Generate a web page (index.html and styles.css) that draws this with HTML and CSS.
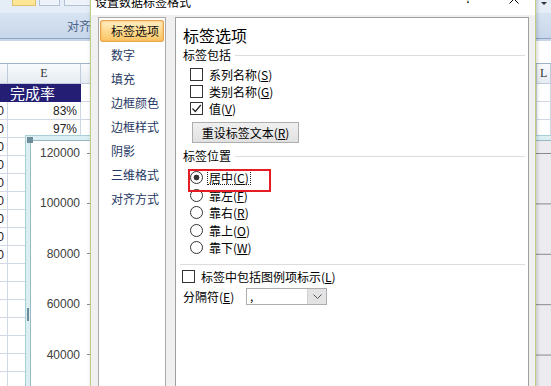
FILE: index.html
```html
<!DOCTYPE html>
<html lang="zh-CN">
<head>
<meta charset="utf-8">
<title>设置数据标签格式</title>
<link rel="stylesheet" href="styles.css">
</head>
<body>

<div class="excel">
  <div class="ribbon">
    <div class="rb-tools">
      <span class="rb-btn on"></span><span class="rb-btn"></span><span class="rb-btn wide"></span>
      <span class="rb-drop"></span>
    </div>
    <div class="rb-group">对齐方式</div>
  </div>
  <div class="fbar"></div>
  <div class="sheet">
    <div class="c hd"></div><div class="c hd">E</div><div class="c hd"></div><div class="c hd hl">L</div>
    <div class="c navy"></div><div class="c navy">完成率</div><div class="c"></div><div class="c"></div>
    <div class="c num">82000</div><div class="c num">83%</div><div class="c"></div><div class="c"></div>
    <div class="c num">96000</div><div class="c num">97%</div><div class="c"></div><div class="c"></div>
    <div class="c num">75000</div><div class="c"></div><div class="c"></div><div class="c"></div>
    <div class="c num">88000</div><div class="c"></div><div class="c"></div><div class="c"></div>
    <div class="c num">91000</div><div class="c"></div><div class="c"></div><div class="c"></div>
    <div class="c num">67000</div><div class="c"></div><div class="c"></div><div class="c"></div>
    <div class="c num">79000</div><div class="c"></div><div class="c"></div><div class="c"></div>
    <div class="c num">84000</div><div class="c"></div><div class="c"></div><div class="c"></div>
    <div class="c num">93000</div><div class="c"></div><div class="c"></div><div class="c"></div>
    <div class="c"></div><div class="c"></div><div class="c"></div><div class="c"></div>
    <div class="c"></div><div class="c"></div><div class="c"></div><div class="c"></div>
    <div class="c"></div><div class="c"></div><div class="c"></div><div class="c"></div>
    <div class="c"></div><div class="c"></div><div class="c"></div><div class="c"></div>
    <div class="c"></div><div class="c"></div><div class="c"></div><div class="c"></div>
    <div class="c"></div><div class="c"></div><div class="c"></div><div class="c"></div>
    <div class="c"></div><div class="c"></div><div class="c"></div><div class="c"></div>
  </div>
</div>

<div class="chart">
  <span class="grip corner"></span><span class="grip side"></span>
  <div class="chart-in">
    <div class="axis">
      <span>120000</span><span>100000</span><span>80000</span><span>60000</span><span>40000</span><span>20000</span>
    </div>
    <div class="plot"></div>
  </div>
</div>

<div class="dialog">
  <div class="titlebar">
    <span class="title">设置数据标签格式</span>
    <span class="help">?</span>
    <svg class="close" width="10" height="10" viewBox="0 0 10 10"><path d="M0.5 0.5L9.5 9.5M9.5 0.5L0.5 9.5" stroke="#000" stroke-width="1" fill="none"/></svg>
  </div>
  <div class="dlg-body">
    <ul class="nav">
      <li class="sel">标签选项</li>
      <li>数字</li>
      <li>填充</li>
      <li>边框颜色</li>
      <li>边框样式</li>
      <li>阴影</li>
      <li>三维格式</li>
      <li>对齐方式</li>
    </ul>
    <div class="panel">
      <h1>标签选项</h1>
      <div class="group">标签包括</div>
      <div class="opts">
        <label class="opt"><span class="cb"></span><span>系列名称(<u>S</u>)</span></label>
        <label class="opt"><span class="cb"></span><span>类别名称(<u>G</u>)</span></label>
        <label class="opt"><span class="cb"><svg width="11" height="11" viewBox="0 0 11 11"><path d="M1.5 5.5L4.3 8.5L9.8 2" stroke="#222" stroke-width="1.2" fill="none"/></svg></span><span>值(<u>V</u>)</span></label>
      </div>
      <button class="btn">重设标签文本(<u>R</u>)</button>
      <div class="group">标签位置</div>
      <div class="opts radios">
        <label class="opt mark"><span class="rd on"></span><span class="focus">居中(<u>C</u>)</span></label>
        <label class="opt"><span class="rd"></span><span>靠左(<u>F</u>)</span></label>
        <label class="opt"><span class="rd"></span><span>靠右(<u>R</u>)</span></label>
        <label class="opt"><span class="rd"></span><span>靠上(<u>O</u>)</span></label>
        <label class="opt"><span class="rd"></span><span>靠下(<u>W</u>)</span></label>
      </div>
      <hr class="sep">
      <label class="opt flush"><span class="cb"></span><span>标签中包括图例项标示(<u>L</u>)</span></label>
      <div class="field">
        <span class="field-label">分隔符(<u>E</u>)</span>
        <span class="combo">
          <span class="val">,</span>
          <span class="arrow"><svg width="9" height="5" viewBox="0 0 9 5"><path d="M0.5 0.5L4.5 4.5L8.5 0.5" stroke="#555" fill="none"/></svg></span>
        </span>
      </div>
    </div>
  </div>
</div>

</body>
</html>
```

FILE: styles.css
```css
* { box-sizing: border-box; }

html, body { margin: 0; height: 100%; }

body {
  position: relative; overflow: hidden;
  width: 551px; height: 386px;
  font: 12px "Noto Sans CJK SC", sans-serif; color: #000;
  background: #fff;
}

/* ---- excel behind ---- */

.excel { display: flex; flex-direction: column; height: 100%; }

.ribbon {
  height: 41px; flex: none;
  background: linear-gradient(#e5edf7 0, #e5edf7 13px, #d7e3f2 13px, #c8d7eb 38px,
    #8ea5c3 38px, #8ea5c3 39px, #c9d6e8 39px);
}

.rb-tools { display: flex; height: 13px; padding-left: 12px; }

.rb-btn {
  width: 24px; height: 6px; margin-right: 3px;
  border: 1px solid #b3c3d7; border-top: none; background: #eef3fa;
}
.rb-btn.on { background: #fce594; border-color: #e0c26a; }
.rb-btn + .rb-btn { width: 21px; }
.rb-btn.wide { width: 29px; margin-left: 1px; }

.rb-drop {
  margin: 2px 4px 0 auto; width: 0; height: 0;
  border-left: 3px solid transparent; border-right: 3px solid transparent;
  border-top: 3px solid #333;
}

.rb-group { height: 25px; line-height: 25px; padding-left: 67px; color: #4c6488; }

.fbar { height: 23px; flex: none; border-bottom: 1px solid #9fb3cb; background: #fff; }

.sheet {
  display: grid;
  grid-template-columns: 8px 73px 1fr 14px;
  grid-template-rows: 20px;
  grid-auto-rows: 18px;
}

.c {
  display: flex; align-items: center; overflow: hidden; white-space: nowrap;
  border-right: 1px solid #d0d7e5; border-bottom: 1px solid #d0d7e5;
}

.hd {
  justify-content: center;
  font: 12px "Liberation Serif", serif; color: #333;
  background: linear-gradient(#f8fafc, #e6ecf3);
  border-color: #c0ccdb;
}
.hd.hl { justify-content: flex-start; padding-left: 3px; }

.navy {
  background: #241f74; color: #fff; font-size: 15px; padding-left: 2px;
  border-color: #241f74;
}

.num {
  justify-content: flex-end; padding-right: 3px;
  font: 12px "Liberation Sans", sans-serif; color: #222;
}

/* ---- chart object ---- */

.chart {
  position: absolute; left: 25px; top: 135px; width: 560px; height: 300px;
  background: #dbeff3; border: 1px solid #a7cfd8; padding: 4px;
}

.grip {
  position: absolute;
  background-image: radial-gradient(circle, #6d8e98 0.8px, transparent 1px);
  background-size: 2px 2px;
}
.grip.corner { left: 1px; top: 1px; width: 6px; height: 6px; }
.grip.side { left: 1px; top: 172px; width: 2px; height: 13px; }

.chart-in { display: flex; height: 100%; background: #fff; border: 1px solid #9bb9c4; }

.axis {
  width: 59px; flex: none; padding-top: 4px;
  display: flex; flex-direction: column; gap: 34.4px;
  font: 12px "Liberation Sans", sans-serif; color: #404040;
}

.axis span { display: flex; justify-content: flex-end; align-items: center; line-height: 16px; }
.axis span::after { content: ""; width: 3px; height: 1px; margin-left: 7px; background: #8a8a8a; }

.plot {
  flex: 1;
  background-color: #ebebf0;
  background-image: linear-gradient(#8a8a8a 0, #8a8a8a 1px, transparent 1px);
  background-size: 100% 50.4px;
  background-position: 0 12px;
}

/* ---- dialog window ---- */

.dialog {
  position: absolute; left: 90px; top: -16px; width: 446px; height: 440px;
  display: flex; flex-direction: column;
  border: 1px solid #bccf82; background: #f0f0f0;
  box-shadow: 1px 0 4px rgba(0, 0, 0, .2);
}

.titlebar {
  height: 30px; flex: none; display: flex; align-items: flex-start;
  padding: 10px 16px 0 4px; background: #fff;
}
.title { line-height: 14px; }
.help { margin: -4px 38px 0 auto; line-height: 14px; }
.close { margin-top: -1px; }

.dlg-body { flex: 1; display: flex; gap: 9px; padding: 2px 6px 0 7px; }

.nav {
  width: 68px; flex: none; margin: 0; padding: 1px; list-style: none;
  background: #fff; border: 1px solid #a9a9a9;
}

.nav li { height: 24px; line-height: 24px; padding-left: 11px; color: #1f3864; }

.nav li.sel {
  height: 22px; line-height: 20px; margin: 1px 0; padding-left: 10px; color: #111;
  border: 1px solid #e3a74e; border-radius: 2px;
  background: linear-gradient(#fff1c9, #fdd98f 50%, #fcc766);
  box-shadow: inset 0 0 3px #f6ad4a;
}

.panel { flex: 1; background: #fff; border: 1px solid #a0a0a0; padding: 0 3px 0 7px; }

.panel h1 { margin: 7px 0 0; font-size: 16px; font-weight: normal; line-height: 20px; }

.group { display: flex; align-items: center; line-height: 16px; margin-top: 2px; }
.group::after { content: ""; flex: 1; height: 1px; margin-left: 4px; background: #dcdcdc; }

.opts { margin-top: 3px; padding-left: 7px; }

.opt { display: flex; align-items: center; gap: 6px; height: 17px; }

.cb {
  width: 13px; height: 13px; flex: none;
  border: 1px solid #333; background: #fff;
  display: flex; align-items: center; justify-content: center;
}

.btn {
  display: block; width: 107px; height: 21px; margin: 5px 0 0 9px; padding: 0;
  font: 12px "Noto Sans CJK SC", sans-serif; color: #000;
  border: 1px solid #adadad; background: linear-gradient(#f0f0f0, #e1e1e1);
}

.group + .radios, .btn + .group { margin-top: 5px; }
.radios { margin-top: 6px; }
.radios .opt { height: 17.5px; }

.rd { width: 13px; height: 13px; flex: none; border: 1px solid #333; border-radius: 50%; background: #fff; }
.rd.on { background: radial-gradient(circle, #333 0, #333 2.6px, #fff 3.2px); }

.mark { position: relative; }
.mark::after {
  content: ""; position: absolute; left: -2px; top: 0; width: 79px; height: 19px;
  border: 2px solid #e51c23;
}

.focus { line-height: 13px; padding: 0 1px; margin-left: -1px; outline: 1px dotted #222; }

.sep { margin: 7px 0 0 -3px; border: 0; height: 1px; background: #dcdcdc; }

.opt.flush { margin-top: 3px; }
.flush .cb { margin-left: -1px; }

.field { display: flex; align-items: center; height: 17px; margin-top: 3px; }
.field-label { width: 63px; }

.combo { display: flex; width: 81px; height: 17px; border: 1px solid #abadb3; background: #fff; }
.combo .val { flex: 1; padding-left: 3px; line-height: 14px; }
.combo .arrow {
  width: 19px; display: flex; align-items: center; justify-content: center;
  background: #e3e3e3; border-left: 1px solid #d0d0d0;
}
```
